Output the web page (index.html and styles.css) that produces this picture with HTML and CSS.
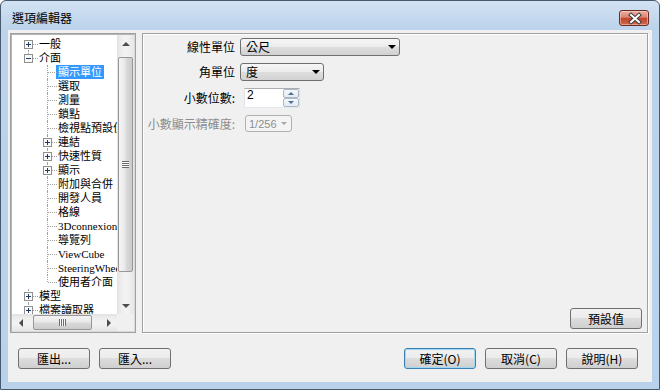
FILE: index.html
```html
<!DOCTYPE html>
<html lang="zh-Hant">

<head>
    <meta charset="UTF-8">
    <title>選項編輯器</title>
    <link rel="stylesheet" href="styles.css">
</head>

<body>
    <div class="window">
        <div class="titlebar">
            <span class="title">選項編輯器</span>
            <button class="close">
                <svg width="28" height="14" viewBox="0 0 28 14">
                    <path d="M11 4 L19 11 M19 4 L11 11" stroke="#3b3b3b" stroke-width="4" stroke-linecap="square" fill="none"/>
                    <path d="M11 4 L19 11 M19 4 L11 11" stroke="#fff" stroke-width="2" stroke-linecap="square" fill="none"/>
                </svg>
            </button>
        </div>

        <div class="client">
            <div class="main">
                <!-- tree of option pages -->
                <div class="tree-box">
                    <div class="tree-inner">
                        <div class="tree">
                            <div class="row"><span class="g first"><svg class="exp" width="9" height="9" viewBox="0 0 9 9"><rect x=".5" y=".5" width="8" height="8" fill="#fafafa" stroke="#8f8f8f"/><path d="M2 4.5h5M4.5 2v5" stroke="#1f3a66"/></svg></span><span class="t">一般</span></div>
                            <div class="row"><span class="g end"><svg class="exp" width="9" height="9" viewBox="0 0 9 9"><rect x=".5" y=".5" width="8" height="8" fill="#fafafa" stroke="#8f8f8f"/><path d="M2 4.5h5" stroke="#1f3a66"/></svg></span><span class="t">介面</span></div>
                            <div class="row"><span class="g pipe"></span><span class="g tee"></span><span class="t sel">顯示單位</span></div>
                            <div class="row"><span class="g pipe"></span><span class="g tee"></span><span class="t">選取</span></div>
                            <div class="row"><span class="g pipe"></span><span class="g tee"></span><span class="t">測量</span></div>
                            <div class="row"><span class="g pipe"></span><span class="g tee"></span><span class="t">鎖點</span></div>
                            <div class="row"><span class="g pipe"></span><span class="g tee"></span><span class="t">檢視點預設位置</span></div>
                            <div class="row"><span class="g pipe"></span><span class="g tee"><svg class="exp" width="9" height="9" viewBox="0 0 9 9"><rect x=".5" y=".5" width="8" height="8" fill="#fafafa" stroke="#8f8f8f"/><path d="M2 4.5h5M4.5 2v5" stroke="#1f3a66"/></svg></span><span class="t">連結</span></div>
                            <div class="row"><span class="g pipe"></span><span class="g tee"><svg class="exp" width="9" height="9" viewBox="0 0 9 9"><rect x=".5" y=".5" width="8" height="8" fill="#fafafa" stroke="#8f8f8f"/><path d="M2 4.5h5M4.5 2v5" stroke="#1f3a66"/></svg></span><span class="t">快速性質</span></div>
                            <div class="row"><span class="g pipe"></span><span class="g tee"><svg class="exp" width="9" height="9" viewBox="0 0 9 9"><rect x=".5" y=".5" width="8" height="8" fill="#fafafa" stroke="#8f8f8f"/><path d="M2 4.5h5M4.5 2v5" stroke="#1f3a66"/></svg></span><span class="t">顯示</span></div>
                            <div class="row"><span class="g pipe"></span><span class="g tee"></span><span class="t">附加與合併</span></div>
                            <div class="row"><span class="g pipe"></span><span class="g tee"></span><span class="t">開發人員</span></div>
                            <div class="row"><span class="g pipe"></span><span class="g tee"></span><span class="t">格線</span></div>
                            <div class="row"><span class="g pipe"></span><span class="g tee"></span><span class="t">3Dconnexion</span></div>
                            <div class="row"><span class="g pipe"></span><span class="g tee"></span><span class="t">導覽列</span></div>
                            <div class="row"><span class="g pipe"></span><span class="g tee"></span><span class="t">ViewCube</span></div>
                            <div class="row"><span class="g pipe"></span><span class="g tee"></span><span class="t">SteeringWheels</span></div>
                            <div class="row"><span class="g pipe"></span><span class="g end"></span><span class="t">使用者介面</span></div>
                            <div class="row"><span class="g tee"><svg class="exp" width="9" height="9" viewBox="0 0 9 9"><rect x=".5" y=".5" width="8" height="8" fill="#fafafa" stroke="#8f8f8f"/><path d="M2 4.5h5M4.5 2v5" stroke="#1f3a66"/></svg></span><span class="t">模型</span></div>
                            <div class="row"><span class="g tee"><svg class="exp" width="9" height="9" viewBox="0 0 9 9"><rect x=".5" y=".5" width="8" height="8" fill="#fafafa" stroke="#8f8f8f"/><path d="M2 4.5h5M4.5 2v5" stroke="#1f3a66"/></svg></span><span class="t">檔案讀取器</span></div>
                        </div>

                        <div class="vscroll">
                            <span class="sb-btn"><i class="tri up"></i></span>
                            <span class="thumb-v"><i class="grip-v"></i></span>
                            <span class="sb-fill"></span>
                            <span class="sb-btn"><i class="tri down"></i></span>
                        </div>
                        <div class="hscroll">
                            <span class="sb-btn"><i class="tri left"></i></span>
                            <span class="thumb-h"><i class="grip-h"></i></span>
                            <span class="sb-fill"></span>
                            <span class="sb-btn"><i class="tri right"></i></span>
                        </div>
                        <div class="corner"></div>
                    </div>
                </div>

                <!-- settings page -->
                <div class="panel">
                    <div class="form">
                        <label class="lbl">線性單位</label>
                        <div class="combo wide"><span>公尺</span><i class="arrow"></i></div>

                        <label class="lbl">角單位</label>
                        <div class="combo mid"><span>度</span><i class="arrow"></i></div>

                        <label class="lbl">小數位數:</label>
                        <div class="spin">
                            <span class="spin-field">2</span>
                            <span class="spin-btns">
                                <span class="spin-btn"><i class="tri sm-up"></i></span>
                                <span class="spin-btn"><i class="tri sm-down"></i></span>
                            </span>
                        </div>

                        <label class="lbl off">小數顯示精確度:</label>
                        <div class="combo small off"><span>1/256</span><i class="arrow"></i></div>
                    </div>
                    <div class="panel-foot">
                        <button class="btn">預設值</button>
                    </div>
                </div>
            </div>

            <div class="actions">
                <button class="btn">匯出...</button>
                <button class="btn">匯入...</button>
                <span class="spacer"></span>
                <button class="btn default">確定(O)</button>
                <button class="btn">取消(C)</button>
                <button class="btn">說明(H)</button>
            </div>
        </div>
    </div>
</body>

</html>
```

FILE: styles.css
```css
* {
    box-sizing: border-box;
}

body {
    margin: 0;
    font-family: "Liberation Sans", "Noto Sans CJK TC", sans-serif;
    font-size: 12px;
    color: #000;
    background: #fff;
}

.window {
    width: 660px;
    height: 390px;
    border: 1px solid #465a70;
    border-radius: 6px 6px 0 0;
    background: linear-gradient(#d2e2f3, #bcd3eb 28px, #b9d1ea);
    display: flex;
    flex-direction: column;
    padding: 0 7px 7px;
}

.titlebar {
    height: 29px;
    margin: 0 -7px;
    padding: 9px 10px 0 11px;
    display: flex;
    align-items: flex-start;
}

.title {
    line-height: 16px;
    font-family: "Noto Sans CJK TC", sans-serif;
}

.close {
    margin-left: auto;
    width: 30px;
    height: 16px;
    padding: 0;
    border: 1px solid #6b2a20;
    border-radius: 3px;
    background: linear-gradient(#eab0a3, #d9826f 45%, #c2452c 52%, #d0674c);
    box-shadow: inset 0 0 0 1px rgba(255, 220, 210, 0.5);
    display: flex;
}

.client {
    flex: 1;
    background: #f0f0f0;
    padding: 3px 4px 0 2px;
    display: flex;
    flex-direction: column;
}

.main {
    display: flex;
    gap: 6px;
    height: 300px;
}

/* tree */

.tree-box {
    width: 126px;
    border: 1px solid #a0a0a0;
}

.tree-inner {
    height: 100%;
    border: 1px solid;
    border-color: #b5b5b5 #d9d9d9 #d9d9d9 #b5b5b5;
    background: #fff;
    display: grid;
    grid-template-columns: 1fr 17px;
    grid-template-rows: 1fr 17px;
}

.tree {
    overflow: hidden;
    padding: 2px 0 0 7px;
    font-family: "Liberation Serif", "Noto Sans CJK TC", serif;
    font-size: 11px;
}

.row {
    display: flex;
    height: 14px;
    line-height: 14px;
    white-space: nowrap;
}

.g {
    flex: none;
    width: 19px;
    height: 14px;
    position: relative;
    display: flex;
    align-items: center;
    justify-content: center;
}

.g::before {
    content: "";
    position: absolute;
    left: 9px;
    top: 0;
    bottom: 0;
    border-left: 1px dotted #a0a0a0;
}

.g::after {
    content: "";
    position: absolute;
    left: 10px;
    right: 0;
    top: 7px;
    border-top: 1px dotted #a0a0a0;
}

.g.first::before {
    top: 7px;
}

.g.end::before {
    bottom: 7px;
}

.g.pipe::before,
.g.pipe::after {
    display: none;
}

.exp {
    position: relative;
    z-index: 1;
    display: block;
}

.t {
    padding: 0 1px;
}

.t.sel {
    background: #3399ff;
    color: #fff;
    margin-left: -1px;
    padding: 0 2px;
}

/* scrollbars */

.vscroll {
    display: flex;
    flex-direction: column;
    background: linear-gradient(90deg, #e2e2e2, #eeeeee 25%, #f3f3f3 50%, #eeeeee 75%, #e6e6e6);
}

.hscroll {
    display: flex;
    background: linear-gradient(#e2e2e2, #eeeeee 25%, #f3f3f3 50%, #eeeeee 75%, #e6e6e6);
}

.corner {
    background: #f0f0f0;
}

.sb-btn {
    flex: none;
    width: 17px;
    height: 17px;
    display: flex;
    align-items: center;
    justify-content: center;
}

.sb-fill {
    flex: 1;
}

.tri {
    width: 0;
    height: 0;
    border: 4px solid transparent;
}

.tri.up {
    border-top: 0;
    border-bottom-color: #4d4d4d;
}

.tri.down {
    border-bottom: 0;
    border-top-color: #4d4d4d;
}

.tri.left {
    border-left: 0;
    border-right-color: #4d4d4d;
}

.tri.right {
    border-right: 0;
    border-left-color: #4d4d4d;
}

.thumb-v {
    margin: 5px 0 0 1px;
    width: 15px;
    height: 215px;
    border: 1px solid #979797;
    border-radius: 2px;
    background: linear-gradient(90deg, #f4f4f4, #e9e9e9 45%, #dadada 55%, #cbcbcb);
    display: flex;
    align-items: center;
    justify-content: center;
}

.thumb-h {
    margin: 1px 0 0 4px;
    width: 59px;
    height: 15px;
    border: 1px solid #979797;
    border-radius: 2px;
    background: linear-gradient(#f4f4f4, #e9e9e9 45%, #dadada 55%, #cbcbcb);
    display: flex;
    align-items: center;
    justify-content: center;
}

.grip-v {
    width: 7px;
    height: 7px;
    background: repeating-linear-gradient(#6e6e6e 0 1px, #f8f8f8 1px 2px);
}

.grip-h {
    width: 7px;
    height: 7px;
    background: repeating-linear-gradient(90deg, #6e6e6e 0 1px, #f8f8f8 1px 2px);
}

/* settings panel */

.panel {
    flex: 1;
    border: 1px solid #a0a0a0;
    box-shadow: inset 1px 1px #fff, 1px 1px #fff;
    display: flex;
    flex-direction: column;
}

.form {
    display: grid;
    grid-template-columns: 92px auto;
    grid-template-rows: 18px 18px 20px 17px;
    column-gap: 5px;
    row-gap: 7px;
    padding-top: 4px;
    align-items: center;
    justify-items: start;
}

.lbl {
    justify-self: end;
    font-family: "Noto Sans CJK TC", sans-serif;
    line-height: 14px;
}

.lbl.off {
    color: #8d8d8d;
}

.combo {
    height: 18px;
    border: 1px solid #707070;
    border-radius: 3px;
    background: linear-gradient(#f6f6f6, #ebebeb 50%, #dedede 50%, #d2d2d2);
    display: flex;
    align-items: center;
    padding: 0 3px 0 5px;
    font-family: "Noto Sans CJK TC", sans-serif;
    line-height: 14px;
}

.combo.wide {
    width: 160px;
}

.combo.mid {
    width: 84px;
}

.combo.small {
    width: 47px;
    height: 17px;
    margin-left: 5px;
    padding: 0 4px 0 3px;
    font-size: 11px;
}

.combo .arrow {
    margin-left: auto;
    width: 0;
    height: 0;
    border-top: 4px solid #000;
    border-left: 4px solid transparent;
    border-right: 4px solid transparent;
}

.combo.off {
    border-color: #adb2b5;
    background: #f4f4f4;
    color: #8d8d8d;
    font-family: "Liberation Sans", sans-serif;
}

.combo.off .arrow {
    border-top-color: #a6a6a6;
    border-top-width: 3px;
    border-left-width: 3px;
    border-right-width: 3px;
}

.spin {
    margin-left: 4px;
    width: 56px;
    height: 20px;
    border: 1px solid #abadb3;
    border-color: #abadb3 #dbdfe6 #e3e9ef #e2e3ea;
    background: #fff;
    display: flex;
}

.spin-field {
    flex: 1;
    padding: 0 0 0 2px;
    line-height: 12px;
}

.spin-btns {
    width: 16px;
    display: flex;
    flex-direction: column;
}

.spin-btn {
    flex: 1;
    border: 1px solid #a9b8c9;
    border-radius: 2px;
    background: linear-gradient(#f5f7f9, #e4eaf0);
    display: flex;
    align-items: center;
    justify-content: center;
}

.tri.sm-up {
    border-width: 3px;
    border-top: 0;
    border-bottom-color: #4a6fa0;
}

.tri.sm-down {
    border-width: 3px;
    border-bottom: 0;
    border-top-color: #4a6fa0;
}

.panel-foot {
    margin-top: auto;
    display: flex;
    justify-content: flex-end;
    padding: 0 5px 3px 0;
}

/* buttons */

.btn {
    width: 72px;
    height: 21px;
    padding: 0;
    border: 1px solid #707070;
    border-radius: 3px;
    background: linear-gradient(#f2f2f2, #ebebeb 50%, #dddddd 50%, #cfcfcf);
    font-family: "Noto Sans CJK TC", sans-serif;
    font-size: 12px;
    line-height: 14px;
    color: #000;
}

.btn.default {
    border-color: #3c7fb1;
    box-shadow: inset 0 0 0 1px #9fd8f5;
}

.actions {
    margin-top: 15px;
    padding: 0 10px 0 8px;
    display: flex;
    gap: 9px;
}

.spacer {
    flex: 1;
}
```
